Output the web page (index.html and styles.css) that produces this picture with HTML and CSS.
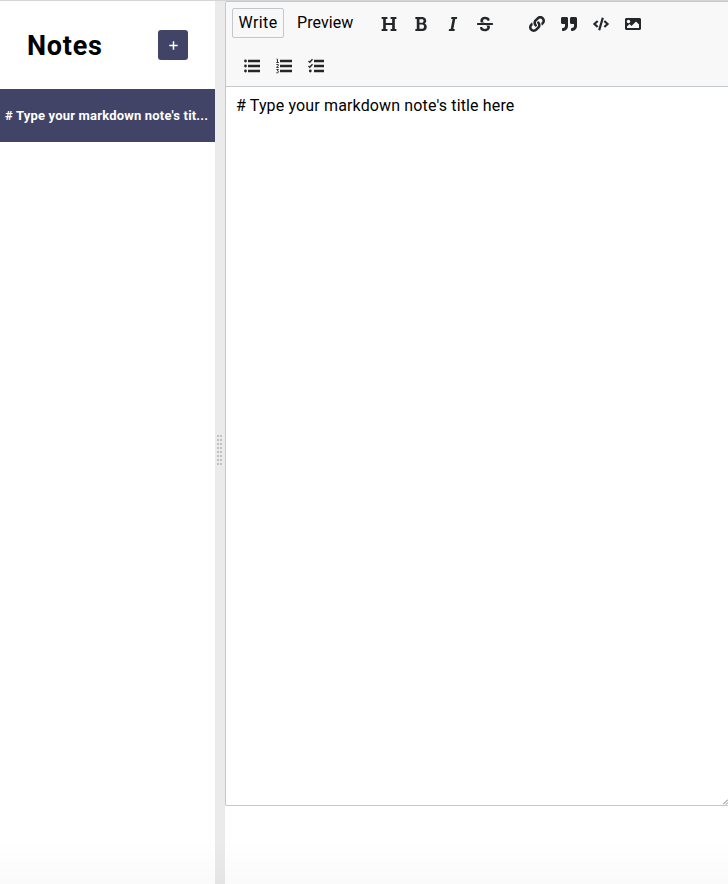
FILE: index.html
```html
<!DOCTYPE html>
<html lang="en">
<head>
<meta charset="utf-8">
<title>Notes</title>
<link rel="stylesheet" href="styles.css">
</head>
<body>
<main class="app">
  <aside class="sidebar">
    <header class="sidebar-header">
      <h1>Notes</h1>
      <button class="new-note" aria-label="New note"><svg viewBox="0 0 9 9"><path d="M4.500 .3v8.400M.3 4.500h8.400"/></svg></button>
    </header>
    <div class="note"><span># Type your markdown note's tit...</span></div>
  </aside>
  <div class="gutter"><i class="grip"></i></div>
  <section class="pane">
    <div class="editor">
      <div class="toolbar">
        <div class="tabs"><button class="tab selected"><span class="write">Write</span></button><button class="tab"><span class="preview">Preview</span></button></div>
        <div class="group">
          <button class="tool"><svg viewBox="0 0 512 512"><path d="M496 80V48c0-8.837-7.163-16-16-16H320c-8.837 0-16 7.163-16 16v32c0 8.837 7.163 16 16 16h37.621v128H154.379V96H192c8.837 0 16-7.163 16-16V48c0-8.837-7.163-16-16-16H32c-8.837 0-16 7.163-16 16v32c0 8.837 7.163 16 16 16h37.275v320H32c-8.837 0-16 7.163-16 16v32c0 8.837 7.163 16 16 16h160c8.837 0 16-7.163 16-16v-32c0-8.837-7.163-16-16-16h-37.621V288H357.62v128H320c-8.837 0-16 7.163-16 16v32c0 8.837 7.163 16 16 16h160c8.837 0 16-7.163 16-16v-32c0-8.837-7.163-16-16-16h-37.275V96H480c8.837 0 16-7.163 16-16z"/></svg></button>
          <button class="tool"><svg viewBox="0 0 384 512"><path d="M304.793 243.891c33.639-18.537 53.657-54.16 53.657-95.693 0-48.236-26.25-87.626-68.626-104.179C265.138 34.01 240.849 32 209.661 32H24c-8.837 0-16 7.163-16 16v33.049c0 8.837 7.163 16 16 16h33.113v318.53H24c-8.837 0-16 7.163-16 16V464c0 8.837 7.163 16 16 16h195.69c24.203 0 44.834-1.289 66.866-7.584C337.52 457.193 376 410.647 376 350.014c0-52.168-26.573-91.684-71.207-106.123zM142.217 100.809h67.444c16.294 0 27.536 2.019 37.525 6.717 15.828 8.479 24.906 26.502 24.906 49.446 0 35.029-20.32 56.79-53.029 56.79h-76.846V100.809zm112.642 305.475c-10.14 4.056-22.677 4.907-31.409 4.907h-81.233V275.943h84.367c39.645 0 63.057 25.38 63.057 63.055.001 28.425-13.66 52.483-34.782 67.286z"/></svg></button>
          <button class="tool"><svg viewBox="0 0 320 512"><path d="M204.758 416h-33.849l62.092-320h40.725a16 16 0 0 0 15.704-12.937l6.242-32C297.599 41.184 290.034 32 279.968 32H120.235a16 16 0 0 0-15.704 12.937l-6.242 32C96.362 86.816 103.927 96 113.993 96h33.846l-62.09 320H46.278a16 16 0 0 0-15.704 12.935l-6.245 32C22.402 470.815 29.967 480 40.034 480h158.479a16 16 0 0 0 15.704-12.935l6.245-32c1.927-9.88-5.638-19.065-15.704-19.065z"/></svg></button>
          <button class="tool"><svg viewBox="0 0 512 512"><path d="M496 288H16c-8.837 0-16-7.163-16-16v-32c0-8.837 7.163-16 16-16h480c8.837 0 16 7.163 16 16v32c0 8.837-7.163 16-16 16zm-214.666 16c27.258 12.937 46.524 28.683 46.524 56.243 0 33.108-28.977 53.676-75.621 53.676-32.325 0-76.874-12.08-76.874-44.271V368c0-8.837-7.164-16-16-16H113.75c-8.836 0-16 7.163-16 16v19.204c0 66.845 77.717 101.82 154.487 101.82 88.578 0 162.013-45.438 162.013-134.424 0-19.815-3.618-36.417-10.143-50.6H281.334zm-30.952-96c-32.422-13.505-56.836-28.946-56.836-59.683 0-33.92 30.901-47.406 64.962-47.406 42.647 0 64.962 16.593 64.962 32.985V136c0 8.837 7.163 16 16 16h45.613c8.836 0 16-7.163 16-16v-30.318c0-52.438-71.725-79.875-142.575-79.875-85.203 0-150.726 40.972-150.726 125.646 0 22.71 4.665 41.176 12.777 56.547h129.823z"/></svg></button>
        </div>
        <div class="group">
          <button class="tool"><svg viewBox="0 0 512 512"><path d="M326.612 185.391c59.747 59.809 58.927 155.698.36 214.59-.11.12-.24.25-.36.37l-67.2 67.2c-59.27 59.27-155.699 59.262-214.96 0-59.27-59.26-59.27-155.7 0-214.96l37.106-37.106c9.84-9.84 26.786-3.3 27.294 10.606.648 17.722 3.826 35.527 9.69 52.721 1.986 5.822.567 12.262-3.783 16.612l-13.087 13.087c-28.026 28.026-28.905 73.66-1.155 101.96 28.024 28.579 74.086 28.749 102.325.51l67.2-67.19c28.191-28.191 28.073-73.757 0-101.83-3.701-3.694-7.429-6.564-10.341-8.569a16.037 16.037 0 0 1-6.947-12.606c-.396-10.567 3.348-21.456 11.698-29.806l21.054-21.055c5.521-5.521 14.182-6.199 20.584-1.731a152.482 152.482 0 0 1 20.522 17.197zM467.547 44.449c-59.261-59.262-155.69-59.27-214.96 0l-67.2 67.2c-.12.12-.25.25-.36.37-58.566 58.892-59.387 154.781.36 214.59a152.454 152.454 0 0 0 20.521 17.196c6.402 4.468 15.064 3.789 20.584-1.731l21.054-21.055c8.35-8.35 12.094-19.239 11.698-29.806a16.037 16.037 0 0 0-6.947-12.606c-2.912-2.005-6.64-4.875-10.341-8.569-28.073-28.073-28.191-73.639 0-101.83l67.2-67.19c28.239-28.239 74.3-28.069 102.325.51 27.75 28.3 26.872 73.934-1.155 101.96l-13.087 13.087c-4.35 4.35-5.769 10.79-3.783 16.612 5.864 17.194 9.042 34.999 9.69 52.721.509 13.906 17.454 20.446 27.294 10.606l37.106-37.106c59.271-59.259 59.271-155.699.001-214.959z"/></svg></button>
          <button class="tool"><svg viewBox="0 0 512 512"><path d="M464 32H336c-26.5 0-48 21.5-48 48v128c0 26.5 21.5 48 48 48h80v64c0 35.3-28.7 64-64 64h-8c-13.3 0-24 10.7-24 24v48c0 13.3 10.7 24 24 24h8c88.4 0 160-71.6 160-160V80c0-26.5-21.5-48-48-48zm-288 0H48C21.5 32 0 53.5 0 80v128c0 26.5 21.5 48 48 48h80v64c0 35.3-28.7 64-64 64h-8c-13.3 0-24 10.7-24 24v48c0 13.3 10.7 24 24 24h8c88.4 0 160-71.6 160-160V80c0-26.5-21.5-48-48-48z"/></svg></button>
          <button class="tool"><svg viewBox="0 0 640 512"><path d="M278.9 511.5l-61-17.7c-6.4-1.8-10-8.5-8.2-14.9L346.2 8.7c1.8-6.4 8.5-10 14.9-8.2l61 17.7c6.4 1.8 10 8.5 8.2 14.9L293.8 503.3c-1.9 6.4-8.5 10.1-14.9 8.2zm-114-112.2l43.5-46.4c4.6-4.9 4.3-12.7-.8-17.2L117 256l90.6-79.7c5.1-4.5 5.5-12.3.8-17.2l-43.5-46.4c-4.5-4.8-12.1-5.1-17-.5L3.8 247.2c-5.1 4.7-5.1 12.8 0 17.5l144.1 135.1c4.9 4.6 12.5 4.4 17-.5zm327.2.6l144.1-135.1c5.1-4.7 5.1-12.8 0-17.5L492.1 112.1c-4.8-4.5-12.4-4.3-17 .5L431.6 159c-4.6 4.9-4.3 12.7.8 17.2L523 256l-90.6 79.7c-5.1 4.5-5.5 12.3-.8 17.2l43.5 46.4c4.5 4.9 12.1 5.1 17 .6z"/></svg></button>
          <button class="tool"><svg viewBox="0 0 512 512"><path d="M464 448H48c-26.51 0-48-21.49-48-48V112c0-26.51 21.49-48 48-48h416c26.51 0 48 21.49 48 48v288c0 26.51-21.49 48-48 48zM112 120c-30.928 0-56 25.072-56 56s25.072 56 56 56 56-25.072 56-56-25.072-56-56-56zM64 384h384V272l-87.515-87.515c-4.686-4.686-12.284-4.686-16.971 0L208 320l-55.515-55.515c-4.686-4.686-12.284-4.686-16.971 0L64 336v48z"/></svg></button>
        </div>
        <div class="group lists">
          <button class="tool"><svg viewBox="0 0 16 16"><path d="M4 1.800H16v2.400H4zM4 6.800H16v2.400H4zM4 11.800H16v2.400H4z"/><circle cx="1.500" cy="3" r="1.400"/><circle cx="1.500" cy="8" r="1.400"/><circle cx="1.500" cy="13" r="1.400"/></svg></button>
          <button class="tool"><svg viewBox="0 0 16 16"><path d="M4 1.800H16v2.400H4zM4 6.800H16v2.400H4zM4 11.800H16v2.400H4z"/><path class="line" d="M.5 1.200h1v3.300M.3 4.500h2.500M.4 6.500h1.900v1L.5 9.400h2.300M.4 11.500h2l-1 1.300c1.600 0 1.600 2-.2 2H.3"/></svg></button>
          <button class="tool"><svg viewBox="0 0 16 16"><path d="M6 1.800h10v2.400H6zM6 6.800h10v2.400H6zM6 11.800h10v2.400H6z"/><circle cx="2.300" cy="13" r="1.400"/><path class="check" d="M.5 3l1.300 1.200L4.500 1.300M.5 8l1.300 1.200 2.700-2.900"/></svg></button>
        </div>
      </div>
      <div class="text"><span># Type your markdown note's title here</span></div>
      <svg class="resize" viewBox="0 0 5 7"><path d="M0 6.500L5 1.500M3 6.500l2-2"/></svg>
    </div>
  </section>
</main>
</body>
</html>
```
FILE: styles.css
```css
* { box-sizing: border-box; }
body { margin: 0; background: #fff; color: #000; font: 16px Roboto, sans-serif; overflow: hidden; }
button { padding: 0; border: 0; background: none; font: inherit; color: inherit; }
svg { display: block; }
.app { display: flex; height: 884px; border-top: 1px solid #d3d5d6; }
.sidebar { width: 215px; flex: none; background: linear-gradient(#fff 95%, #fafafa); }
.sidebar-header { display: flex; height: 88px; align-items: center; justify-content: space-between; padding: 0 27px; }
h1 { margin: 0; font-size: 27px; line-height: 32px; font-weight: 700; letter-spacing: .75px; padding-top: 1px; }
.new-note { display: grid; place-items: center; width: 30px; height: 30px; border-radius: 3px; background: #414466; }
.new-note svg { width: 9px; height: 9px; fill: none; stroke: #fff; stroke-width: 1.5; }
.note { display: flex; align-items: center; height: 53px; padding-left: 5px; background: #414466; color: #fff; font-size: 13px; font-weight: 700; white-space: nowrap; letter-spacing: .19px; }
.gutter { display: grid; place-items: center; width: 10px; flex: none; background: linear-gradient(#ebebeb 95%, #e4e4e4); }
.grip { width: 5px; height: 30px; margin: 15px 2px 0 0; background: repeating-linear-gradient(to bottom, transparent 0 2px, #ebebeb 2px 4px), linear-gradient(to right, #c1c1c1 2px, transparent 2px 3px, #c1c1c1 3px); }
.pane { flex: 1; min-width: 0; background: linear-gradient(#fff 95%, #fafafa); }
.editor { position: relative; height: 805px; border: 1px solid #c3c8cc; border-right: 0; border-radius: 2px 0 0 2px; background: #fff; }
.toolbar { display: flex; flex-wrap: wrap; height: 85px; border-bottom: 1px solid #c3c8cc; background: #f8f8f8; }
.tabs { display: flex; width: 147px; padding: 6px 0 0 6px; }
.tab { height: 30px; padding: 0 5px; border: 1px solid transparent; border-radius: 2px; line-height: 28px; }
.tab.selected { width: 52px; border-color: #c3c8cc; }
.tab:last-child { margin-left: 7px; }
.write { letter-spacing: .4px; }
.preview { letter-spacing: .05px; }
.group { display: flex; height: 42px; padding-top: 6px; }
.group + .group { margin-left: 20px; }
.toolbar .lists { width: 100%; margin-left: 10px; }
.tool { display: grid; place-items: center; width: 32px; height: 32px; }
.tool svg { width: 16px; height: 16px; fill: #242729; }
.tool .line { fill: none; stroke: #242729; stroke-width: .95; }
.tool .check { fill: none; stroke: #242729; stroke-width: 1.4; }
.text { padding: 9px 10px; line-height: 19px; white-space: nowrap; letter-spacing: .14px; }
.resize { position: absolute; right: 0; bottom: 0; width: 5px; height: 7px; fill: none; stroke: #555; stroke-width: .8; }
```
